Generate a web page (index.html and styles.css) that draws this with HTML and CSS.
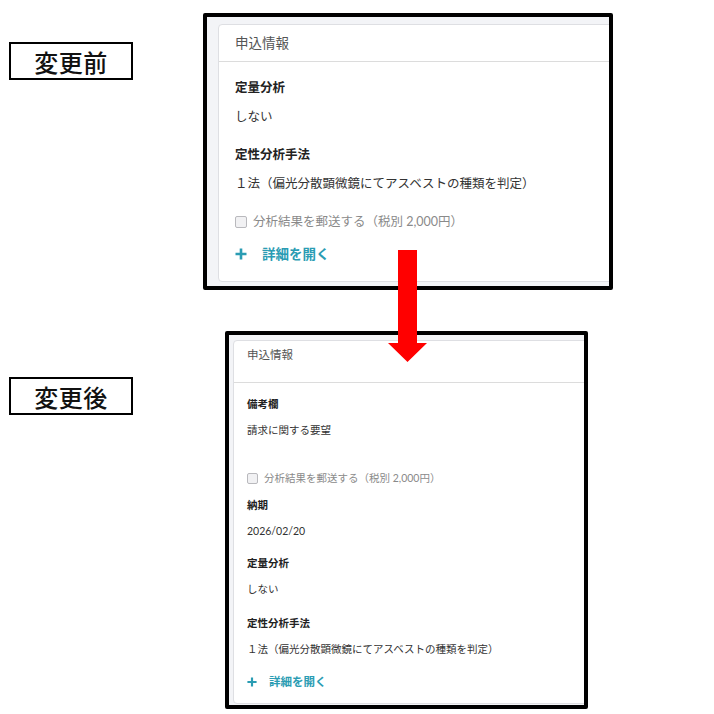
FILE: index.html
```html
<!DOCTYPE html>
<html lang="ja">
<head>
<meta charset="utf-8">
<title>変更前・変更後</title>
<link rel="stylesheet" href="styles.css">
</head>
<body>
<div class="page">
  <div class="row row-before">
    <div class="tag">変更前</div>
    <div class="frame frame-before">
      <div class="card">
        <div class="card-head">申込情報</div>
        <div class="card-body">
          <div class="label">定量分析</div>
          <div class="value">しない</div>
          <div class="label gap-l">定性分析手法</div>
          <div class="value">１法（偏光分散顕微鏡にてアスベストの種類を判定）</div>
          <div class="check gap-l"><span class="box"></span>分析結果を郵送する（税別 2,000円）</div>
          <div class="more gap-m"><svg class="plus" viewBox="0 0 12 12"><path d="M6 0.5V11.5M0.5 6H11.5"/></svg>詳細を開く</div>
        </div>
      </div>
    </div>
  </div>
  <div class="row row-after">
    <div class="tag tag-after">変更後</div>
    <div class="frame frame-after">
      <div class="card">
        <div class="card-head">申込情報</div>
        <div class="card-body">
          <div class="label">備考欄</div>
          <div class="value">請求に関する要望</div>
          <div class="check gap-xl"><span class="box"></span>分析結果を郵送する（税別 2,000円）</div>
          <div class="label gap-s">納期</div>
          <div class="value">2026/02/20</div>
          <div class="label gap-m">定量分析</div>
          <div class="value">しない</div>
          <div class="label gap-l">定性分析手法</div>
          <div class="value">１法（偏光分散顕微鏡にてアスベストの種類を判定）</div>
          <div class="more gap-m"><svg class="plus" viewBox="0 0 12 12"><path d="M6 0.5V11.5M0.5 6H11.5"/></svg>詳細を開く</div>
        </div>
      </div>
    </div>
  </div>
  <svg class="arrow" viewBox="0 0 39 112"><polygon points="10,0 29,0 29,93 39,93 19.5,112 0,93 10,93"/></svg>
</div>
</body>
</html>
```

FILE: styles.css
```css
* { box-sizing: border-box; }
html, body { margin: 0; background: #ffffff; }
body { font-family: Lato, "Noto Sans CJK JP", sans-serif; color: #333; }

.page {
  position: relative;
  width: 714px;
  height: 714px;
  padding-top: 13px;
  display: flex;
  flex-direction: column;
}

.row { display: flex; align-items: flex-start; }
.row-after { margin-top: 41px; }

.tag {
  margin-left: 9px;
  margin-top: 29px;
  width: 124px;
  height: 38px;
  border: 2px solid #000;
  display: flex;
  align-items: center;
  justify-content: center;
  font-family: "Noto Sans CJK JP", sans-serif;
  font-size: 24px;
  font-weight: 500;
  color: #111;
  letter-spacing: 0.5px;
}
.tag-after { margin-top: 46px; }

.frame {
  border: 4px solid #000;
  background: #f3f4f7;
  overflow: hidden;
  border-radius: 2px;
}
.frame-before {
  margin-left: 70px;
  width: 410px;
  height: 277px;
  padding: 7px 0 0 11px;
}
.frame-after {
  margin-left: 92px;
  width: 363px;
  height: 378px;
  padding: 5px 0 0 4px;
}

.card {
  background: #fff;
  border: 1px solid #dedfe3;
  border-radius: 4px;
  margin-right: -20px;
}

.card-head {
  border-bottom: 1px solid #dcdcdc;
  color: #555;
}
.card-body { display: flex; flex-direction: column; align-items: flex-start; }

.label { font-weight: 700; color: #222; }
.check { display: flex; align-items: center; color: #8a8a8a; }
.box {
  display: inline-block;
  border: 1px solid #b9b9bd;
  background: #f1f1f3;
  border-radius: 2px;
}
.more { display: flex; align-items: center; color: #2a9cb3; font-weight: 700; }
.plus { fill: none; stroke: #2a9cb3; }

/* before (larger scale) */
.frame-before .card-head { height: 37px; padding: 9px 0 0 16px; font-size: 13.5px; line-height: 18px; }
.frame-before .card-body { padding: 16px 0 17px 16px; font-size: 12.5px; line-height: 20px; }
.frame-before .value { margin-top: 9px; }
.frame-before .gap-l { margin-top: 18px; }
.frame-before .gap-m { margin-top: 12px; }
.frame-before .box { width: 12px; height: 12px; margin-right: 6px; }
.frame-before .more { font-size: 13.5px; }
.frame-before .plus { width: 12px; height: 12px; margin-right: 15px; stroke-width: 2.6; }

/* after (smaller scale) */
.frame-after .card-head { height: 42px; padding: 5px 0 0 13px; font-size: 11.5px; line-height: 18px; }
.frame-after .card-body { padding: 12px 0 12px 13px; font-size: 10.5px; line-height: 18px; }
.frame-after .value { margin-top: 8px; }
.frame-after .label + .value { margin-top: 8px; }
.frame-after .gap-xl { margin-top: 30px; }
.frame-after .gap-s { margin-top: 9px; }
.frame-after .gap-m { margin-top: 14px; }
.frame-after .gap-l { margin-top: 16px; }
.frame-after .more.gap-m { margin-top: 15px; }
.frame-after .box { width: 11px; height: 11px; margin-right: 6px; }
.frame-after .more { font-size: 11.5px; }
.frame-after .plus { width: 10px; height: 10px; margin-right: 12px; stroke-width: 2.6; }

.arrow {
  position: absolute;
  left: 388px;
  top: 250px;
  width: 39px;
  height: 112px;
  fill: #ff0000;
}
```
